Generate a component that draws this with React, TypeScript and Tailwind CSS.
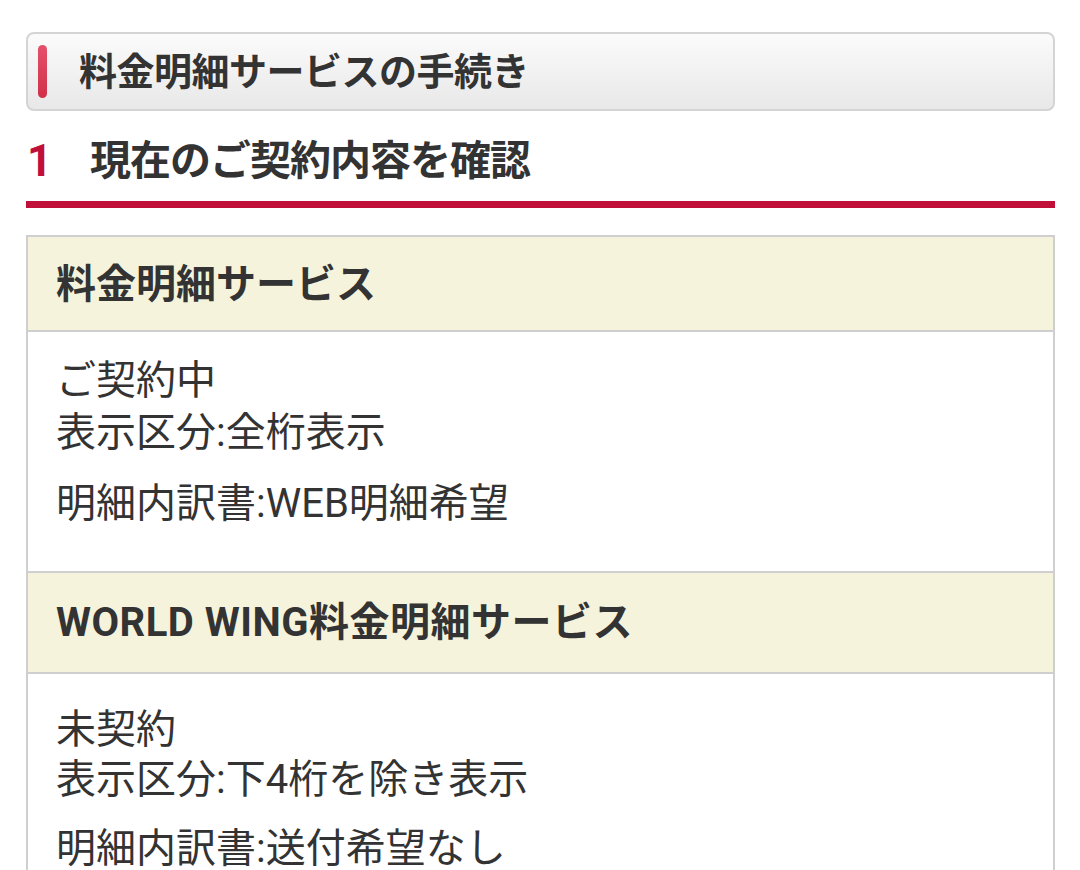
import React from "react";

const font = { fontFamily: 'Roboto, "Noto Sans CJK JP", sans-serif' };

export default function App() {
  return (
    <div className="w-[1080px] h-[870px] overflow-hidden bg-white text-[#333]" style={font}>
      <div className="pl-[26px] pr-[25px] pt-[32px]">
        <div className="flex items-center h-[79px] rounded-[8px] border-2 border-[#d4d4d4] bg-gradient-to-b from-[#fbfbfb] to-[#e8e8e8]">
          <div className="ml-[10px] w-[9px] h-[53px] rounded-full bg-gradient-to-b from-[#e4506a] to-[#d03048]" />
          <div className="ml-[32px] text-[38px] font-bold leading-none tracking-[-0.5px]">料金明細サービスの手続き</div>
        </div>
        <div className="flex items-center h-[90px] pt-[10px]">
          <span className="w-[64px] pl-[1px] text-[44px] font-bold text-[#c0103a] leading-none">1</span>
          <span className="text-[41px] font-bold leading-none tracking-[-1px]">現在のご契約内容を確認</span>
        </div>
        <div className="h-[7px] bg-[#c0103a]" />
        <div className="mt-[27px] border-2 border-[#cfcfcf] border-b-0">
          <div className="flex items-center h-[95px] bg-[#f6f3dc] border-b-2 border-[#cfcfcf] pl-[28px]">
            <span className="text-[40px] font-bold leading-none pt-[3px]">料金明細サービス</span>
          </div>
          <div className="pl-[28px] pt-[23px] pb-[41px] text-[40px] leading-[52px]">
            <p>ご契約中<br />表示区分:全桁表示</p>
            <p className="mt-[19px]">明細内訳書:WEB明細希望</p>
          </div>
          <div className="flex items-center h-[103px] bg-[#f6f3dc] border-y-2 border-[#cfcfcf] pl-[28px]">
            <span className="text-[40px] font-bold leading-none tracking-[0.5px]">WORLD WING料金明細サービス</span>
          </div>
          <div className="pl-[28px] pt-[31px] pb-[42px] text-[40px] leading-[50px]">
            <p>未契約<br />表示区分:下4桁を除き表示</p>
            <p className="mt-[19px]">明細内訳書:送付希望なし</p>
          </div>
        </div>
      </div>
    </div>
  );
}
